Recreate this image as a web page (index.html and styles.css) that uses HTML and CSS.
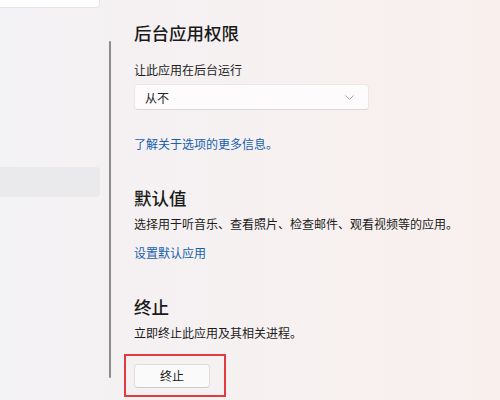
FILE: index.html
```
<!DOCTYPE html>
<html>

<head>
    <title>Settings - App options</title>

    <link rel="stylesheet" href="styles.css">
</head>

<body>

    <div class="window flex">

        <nav class="sidebar">
            <div class="search-box"></div>
            <div class="nav-item nav-item-active"></div>
        </nav>

        <div class="scroll-track">
            <div class="scroll-thumb"></div>
        </div>

        <main class="content">

            <section class="group group-first">
                <h2 class="group-title">后台应用权限</h2>
                <div class="field-label">让此应用在后台运行</div>
                <div class="dropdown flex flex-vertical-center">
                    <span class="dropdown-value">从不</span>
                    <svg class="chevron" width="9" height="5" viewBox="0 0 9 5">
                        <path d="M0.5 0.5 L4.5 4.5 L8.5 0.5" fill="none" stroke="#a8a2a2" stroke-width="1" />
                    </svg>
                </div>
                <a class="link link-spaced" href="#">了解关于选项的更多信息。</a>
            </section>

            <section class="group">
                <h2 class="group-title">默认值</h2>
                <div class="group-desc">选择用于听音乐、查看照片、检查邮件、观看视频等的应用。</div>
                <a class="link" href="#">设置默认应用</a>
            </section>

            <section class="group">
                <h2 class="group-title">终止</h2>
                <div class="group-desc">立即终止此应用及其相关进程。</div>
                <div class="highlight-box">
                    <button type="button" class="btn">终止</button>
                </div>
            </section>

        </main>

    </div>

</body>

</html>
```

FILE: styles.css
```
* {
    margin: 0;
    padding: 0;
    box-sizing: border-box;
}

html,
body {
    width: 100%;
    height: 100%;
}

body {
    font-family: "Noto Sans CJK SC", "Noto Sans", sans-serif;
    color: #1c1c1c;
    background: linear-gradient(90deg, #f3f2f4 0%, #f5f1f2 30%, #f9f0ee 100%);
    overflow: hidden;
}

.flex {
    display: flex;
}

.flex-vertical-center {
    align-items: center;
}

.window {
    width: 100%;
    height: 100%;
}

/* left navigation */
.sidebar {
    width: 100px;
    flex-shrink: 0;
}

.search-box {
    height: 8px;
    background-color: #fdfdfd;
    border: 1px solid #e4e4e6;
    border-top: none;
    border-left: none;
    border-radius: 0 0 4px 0;
}

.nav-item {
    height: 30px;
    margin-top: 159px;
    border-radius: 0 4px 4px 0;
}

.nav-item-active {
    background-color: #eae9eb;
}

/* scrollbar */
.scroll-track {
    width: 34px;
    flex-shrink: 0;
    padding: 41px 0 0 9px;
}

.scroll-thumb {
    width: 2px;
    height: 337px;
    background-color: #8c8b8d;
    border-radius: 1px;
}

/* page content */
.content {
    flex: 1;
}

.group {
    margin-top: 32px;
}

.group-first {
    margin-top: 21px;
}

.group-title {
    font-size: 17.5px;
    font-weight: 500;
    line-height: 24px;
    color: #1a1a1a;
}

.field-label {
    font-size: 12px;
    line-height: 20px;
    margin-top: 15px;
}

.group-desc {
    font-size: 12px;
    line-height: 20px;
    margin-top: 4px;
}

.dropdown {
    width: 235px;
    height: 26px;
    margin-top: 4px;
    padding: 0 10px;
    justify-content: space-between;
    background-color: #fdfbfb;
    border: 1px solid #ece7e7;
    border-bottom-color: #dcd6d6;
    border-radius: 4px;
}

.dropdown-value {
    font-size: 12px;
    color: #222;
}

.chevron {
    margin-right: 4px;
}

.link {
    display: block;
    font-size: 12px;
    line-height: 20px;
    color: #1760ad;
    text-decoration: none;
    margin-top: 9px;
}

.link-spaced {
    margin-top: 24px;
}

/* annotation around the terminate button */
.highlight-box {
    display: inline-block;
    margin: 11px 0 0 -10px;
    padding: 6px 14px 7px 8px;
    border: 2px solid #e23b3f;
}

.btn {
    width: 76px;
    height: 24px;
    font-family: inherit;
    font-size: 12px;
    color: #1c1c1c;
    background-color: #fbfafa;
    border: 1px solid #e2dede;
    border-bottom-color: #cfcaca;
    border-radius: 4px;
}
```
